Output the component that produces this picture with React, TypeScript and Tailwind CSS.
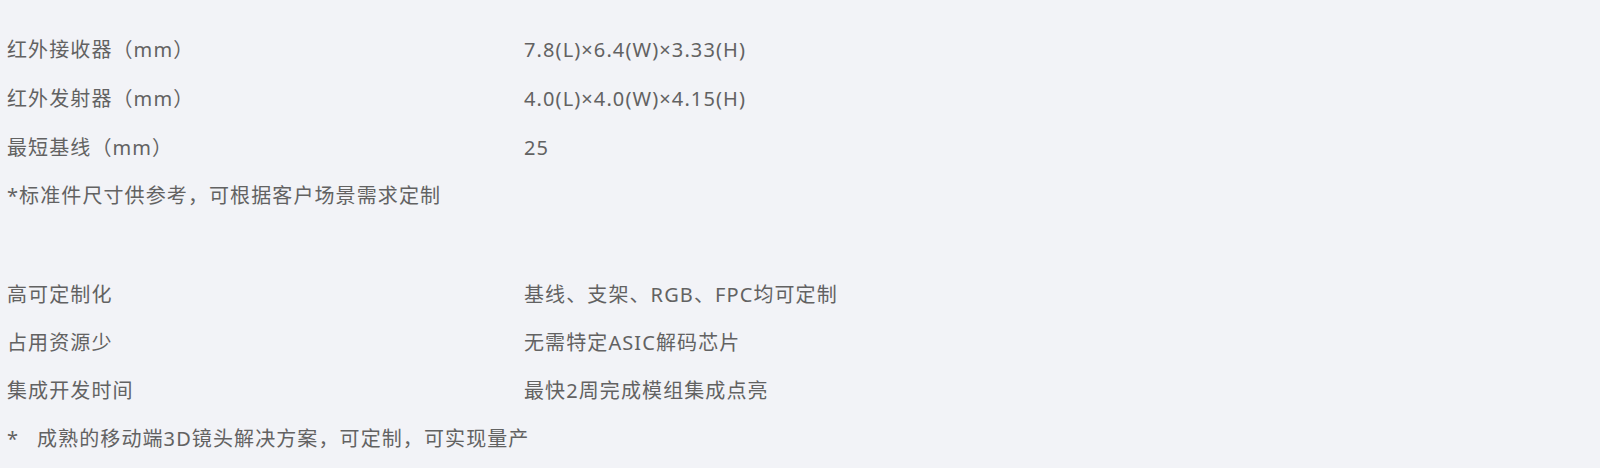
const specs = [
  { label: "红外接收器（mm）", value: "7.8(L)×6.4(W)×3.33(H)" },
  { label: "红外发射器（mm）", value: "4.0(L)×4.0(W)×4.15(H)" },
  { label: "最短基线（mm）", value: "25" },
];

const features = [
  { label: "高可定制化", value: "基线、支架、RGB、FPC均可定制" },
  { label: "占用资源少", value: "无需特定ASIC解码芯片" },
  { label: "集成开发时间", value: "最快2周完成模组集成点亮" },
];

type Row = { label: string; value: string };

function SpecRow({ row, tall }: { row: Row; tall?: boolean }) {
  return (
    <div
      className={`grid grid-cols-[517px_1fr] items-center ${tall ? "h-[49px]" : "h-12"}`}
    >
      <span>{row.label}</span>
      <span>{row.value}</span>
    </div>
  );
}

export default function App() {
  return (
    <div
      className="w-[1600px] h-[468px] overflow-hidden bg-[#f2f3f7] px-[7px] text-[20px] leading-none tracking-[1.1px] text-[#626262]"
      style={{ fontFamily: '"Noto Sans", "Noto Sans CJK SC", sans-serif' }}
    >
      {/* 尺寸 */}
      <section className="pt-[25px]">
        {specs.map((row) => (
          <SpecRow key={row.label} row={row} tall />
        ))}
        <p className="h-[47px] flex items-center">
          *标准件尺寸供参考，可根据客户场景需求定制
        </p>
      </section>

      {/* 优势 */}
      <section className="mt-[52px]">
        {features.map((row) => (
          <SpecRow key={row.label} row={row} />
        ))}
        <p className="h-12 flex items-center">
          <span className="w-[30px]">*</span>
          成熟的移动端3D镜头解决方案，可定制，可实现量产
        </p>
      </section>
    </div>
  );
}
